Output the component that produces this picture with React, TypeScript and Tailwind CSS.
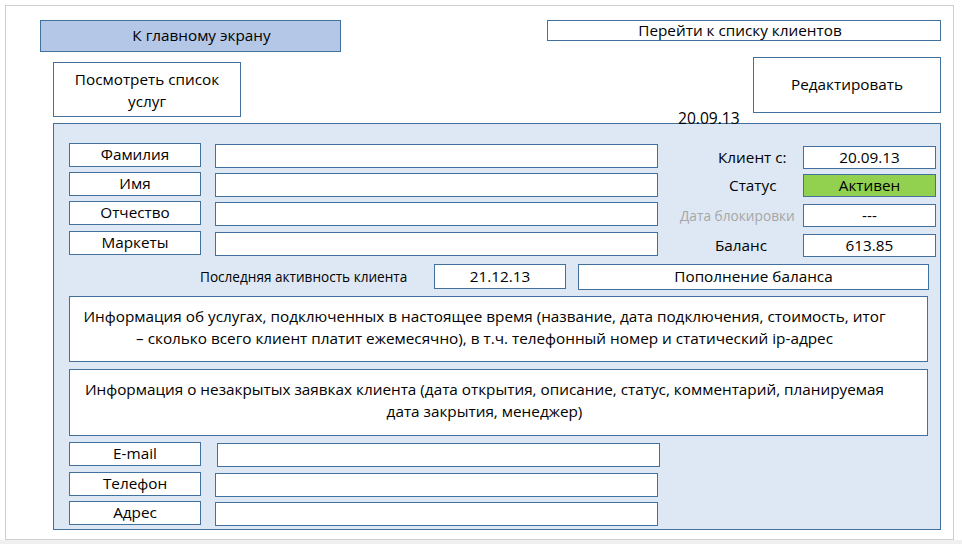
const box = 'border border-[#41719c] bg-white';

function Field({ label, top, inputLeft = 'ml-[14px]' }: { label: string; top: string; inputLeft?: string }) {
  return (
    <div className={`flex items-start h-[24px] ${top}`}>
      <div className={`${box} w-[132px] h-[24px] flex items-center justify-center`}>{label}</div>
      <div className={`${box} w-[443px] h-[24px] mt-[1px] ${inputLeft}`} />
    </div>
  );
}

function Stat({ label, value, pad, muted, green, top }: { label: string; value: string; pad: string; muted?: boolean; green?: boolean; top: string }) {
  return (
    <div className={`flex items-center ${top}`}>
      <div className={`w-[131px] ${pad} ${muted ? 'text-[#a6a6a6] text-[13.7px]' : ''}`}>{label}</div>
      <div
        className={`border border-[#41719c] w-[133px] h-[23px] flex items-center justify-center ${green ? 'bg-[#92d050]' : 'bg-white'}`}
      >
        {value}
      </div>
    </div>
  );
}

export default function App() {
  return (
    <div className="w-[962px] h-[544px] bg-white text-[15.3px] leading-none text-black" style={{ fontFamily: '"Open Sans", sans-serif' }}>
      <div className="w-[949px] h-[535px] bg-white border border-[#cfcfcf] ml-[5px] mt-[5px] pt-[14px]">
        {/* Top navigation */}
        <div className="flex items-start justify-between pl-[34px] pr-[12px]">
          <div className="w-[301px] h-[32px] pl-[22px] border border-[#41719c] bg-[#b4c7e7] flex items-center justify-center">
            К главному экрану
          </div>
          <div className={`${box} w-[394px] h-[21px] pr-[8px] flex items-center justify-center`}>Перейти к списку клиентов</div>
        </div>

        <div className="flex items-start justify-between pl-[47px] pr-[12px]">
          <div className={`${box} w-[188px] h-[55px] mt-[10px] flex items-center justify-center text-center leading-[22px]`}>
            Посмотреть список
            <br />
            услуг
          </div>
          <div className={`${box} w-[188px] h-[56px] mt-[5px] flex items-center justify-center`}>Редактировать</div>
        </div>

        {/* Client card */}
        <div className="relative ml-[47px] mt-[6px] w-[888px] h-[407px] border border-[#41719c] bg-[#dee8f4]">
          <div className="absolute left-[624px] -top-[13px] text-[15.6px]">20.09.13</div>

          <div className="flex pl-[15px] pt-[19px]">
            <div>
              <Field label="Фамилия" top="" />
              <Field label="Имя" top="mt-[5px]" />
              <Field label="Отчество" top="mt-[5px]" />
              <Field label="Маркеты" top="mt-[6px]" />
            </div>
            <div className="ml-[14px] pt-[3px]">
              <Stat label="Клиент с:" value="20.09.13" pad="pl-[46px]" top="" />
              <Stat label="Статус" value="Активен" pad="pl-[57px]" green top="mt-[5px]" />
              <Stat label="Дата блокировки" value="---" pad="pl-[8px]" muted top="mt-[7px]" />
              <Stat label="Баланс" value="613.85" pad="pl-[43px]" top="mt-[7px]" />
            </div>
          </div>

          <div className="flex items-start mt-[7px]">
            <div className="w-[380px] h-[25px] pl-[146px] text-[13.6px] flex items-center">Последняя активность клиента</div>
            <div className={`${box} w-[132px] h-[25px] flex items-center justify-center`}>21.12.13</div>
            <div className={`${box} w-[351px] h-[26px] ml-[12px] flex items-center justify-center`}>Пополнение баланса</div>
          </div>

          <div className={`${box} ml-[15px] mt-[6px] w-[859px] h-[66px] pt-[8px] pr-[28px] text-center leading-[22px]`}>
            Информация об услугах, подключенных в настоящее время (название, дата подключения, стоимость, итог
            <br />– сколько всего клиент платит ежемесячно), в т.ч. телефонный номер и статический ip-адрес
          </div>

          <div className={`${box} ml-[15px] mt-[7px] w-[859px] h-[67px] pt-[8px] pr-[28px] text-center leading-[22px]`}>
            Информация о незакрытых заявках клиента (дата открытия, описание, статус, комментарий, планируемая
            <br />
            дата закрытия, менеджер)
          </div>

          <div className="pl-[15px] mt-[6px]">
            <Field label="E-mail" top="" inputLeft="ml-[16px]" />
            <Field label="Телефон" top="mt-[6px]" />
            <Field label="Адрес" top="mt-[5px]" />
          </div>
        </div>
      </div>
      <div className="h-[4px] bg-[#f0f0f0]" />
    </div>
  );
}
